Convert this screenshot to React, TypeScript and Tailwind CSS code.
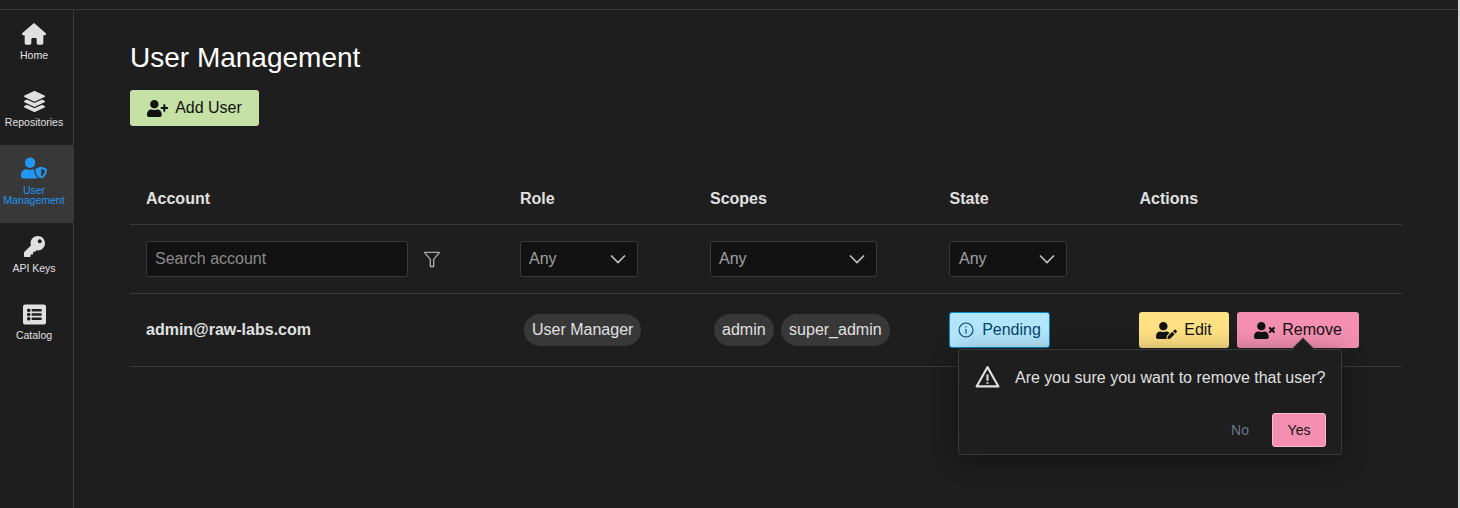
import React from "react";
import { FaLayerGroup, FaKey, FaUserPlus, FaUserEdit, FaUserTimes, FaUserShield, FaListAlt } from "react-icons/fa";
import { FaHouse } from "react-icons/fa6";

function Nav({ icon, label, active, h = 67, pt = 11, mb = 4 }: { icon: React.ReactNode; label: React.ReactNode; active?: boolean; h?: number; pt?: number; mb?: number }) {
  return (
    <div
      className={`flex flex-col items-center w-[73px] pr-[5px] text-[10.5px] leading-[10px] text-center ${active ? "bg-[#383838] text-[#2196f3]" : "text-[#e0e0e0]"}`}
      style={{ height: h, paddingTop: pt }}
    >
      <div className="h-[24px] flex items-center justify-center" style={{ marginBottom: mb }}>{icon}</div>
      <div>{label}</div>
    </div>
  );
}

function Any({ w, pl = "pl-[8px]" }: { w: string; pl?: string }) {
  return (
    <div className={`${w} ${pl} h-[36px] rounded-[3px] border border-[#3a3a3a] bg-[#121212] flex items-center justify-between pr-[11px] text-[#a0a0a0]`}>
      <span>Any</span>
      <svg viewBox="0 0 16 10" className="w-[16px] h-[10px] text-[#c4c4c4]" fill="none" stroke="currentColor" strokeWidth="1.6">
        <path d="M1 1.5 8 8.5 15 1.5" />
      </svg>
    </div>
  );
}

function Chip({ children }: { children: React.ReactNode }) {
  return <span className="h-[32px] px-[8px] rounded-[16px] bg-[#383838] flex items-center text-[#e0e0e0]">{children}</span>;
}

export default function App() {
  return (
    <div className="w-[1460px] h-[508px] overflow-hidden bg-[#1e1e1e] font-['Liberation_Sans',sans-serif] text-[16px] text-[#e0e0e0] flex">
      <div className="flex-1 min-w-0 flex flex-col">
        <div className="h-[10px] shrink-0 border-b border-[#3a3a3a]" />
        <div className="flex flex-1 min-h-0">
          <aside className="w-[74px] shrink-0 border-r border-[#3a3a3a] pt-[1px]">
            <Nav icon={<FaHouse className="w-[24px] h-[24px]" />} label="Home" />
            <Nav icon={<FaLayerGroup className="w-[21px] h-[21px]" />} label="Repositories" />
            <Nav active h={78} mb={5} icon={<FaUserShield className="w-[26px] h-[26px]" />} label={<>User<br />Management</>} />
            <Nav mb={5} icon={<FaKey className="w-[21px] h-[21px]" />} label="API Keys" />
            <Nav pt={12} mb={4} icon={<FaListAlt className="w-[23px] h-[23px]" />} label="Catalog" />
          </aside>
          <main className="flex-1 pl-[56px] pr-[56px] pt-[31px]">
            <h1 className="text-[28px] leading-[34px] text-white font-normal">User Management</h1>
            <button className="mt-[15px] h-[36px] w-[129px] rounded-[3px] bg-[#c5e1a5] text-[#121212] flex items-center justify-center gap-[7px]">
              <FaUserPlus className="w-[21px] h-[17px]" /> Add User
            </button>
            <div className="mt-[46px] w-[1272px]">
              <div className="h-[53px] pt-[1px] flex items-center font-bold border-b border-[#3a3a3a]">
                <div className="w-[390px] pl-[16px]">Account</div>
                <div className="w-[190px]">Role</div>
                <div className="w-[239.5px]">Scopes</div>
                <div className="w-[190px]">State</div>
                <div>Actions</div>
              </div>
              <div className="h-[69px] flex items-center border-b border-[#3a3a3a]">
                <div className="w-[390px] pl-[16px] flex items-center">
                  <div className="w-[262px] h-[36px] rounded-[3px] border border-[#3a3a3a] bg-[#121212] flex items-center pl-[8px] text-[#8a8a8a]">Search account</div>
                  <svg viewBox="0 0 24 24" className="w-[20px] h-[20px] ml-[14px] text-[#a8a8a8]" fill="none" stroke="currentColor" strokeWidth="1.6" strokeLinejoin="round">
                    <path d="M3 4h18l-7 8.5V21h-4v-8.5z" />
                  </svg>
                </div>
                <div className="w-[190px]"><Any w="w-[118px]" /></div>
                <div className="w-[239px]"><Any w="w-[167px]" /></div>
                <div className="w-[190px]"><Any w="w-[118px]" pl="pl-[9px]" /></div>
              </div>
              <div className="h-[73px] flex items-center border-b border-[#3a3a3a]">
                <div className="w-[390px] pl-[16px] font-bold">admin@raw-labs.com</div>
                <div className="w-[190px] pl-[4px] flex"><Chip>User Manager</Chip></div>
                <div className="w-[239px] pl-[4px] flex gap-[7.5px]"><Chip>admin</Chip><Chip>super_admin</Chip></div>
                <div className="w-[190px] flex">
                  <span className="h-[36px] w-[101px] rounded-[3px] border border-[#0288d1] bg-[#b3e5fc] text-[#044868] flex items-center justify-center gap-[8px]">
                    <svg viewBox="0 0 16 16" className="w-[16px] h-[16px]" fill="none" stroke="currentColor" strokeWidth="1.1"><circle cx="8" cy="8" r="7" /><path d="M8 7v4.5M8 4.2v1.2" /></svg>
                    Pending
                  </span>
                </div>
                <div className="flex gap-[8px] relative">
                  <button className="h-[36px] w-[90px] rounded-[3px] bg-[#ffe082] text-[#121212] flex items-center justify-center gap-[7px]">
                    <FaUserEdit className="w-[21px] h-[17px]" /> Edit
                  </button>
                  <button className="h-[36px] w-[122px] rounded-[3px] bg-[#f48fb1] text-[#121212] flex items-center justify-center gap-[7px]">
                    <FaUserTimes className="w-[21px] h-[17px]" /> Remove
                  </button>
                  <div className="absolute left-[-181px] top-[37px] w-[384px] h-[106px] rounded-[3px] border border-[#3a3a3a] bg-[#1e1e1e] shadow-[0_4px_24px_rgba(0,0,0,0.4)]">
                    <div className="absolute right-[30px] top-[-9px] w-[16px] h-[16px] rotate-45 bg-[#1e1e1e] border-l border-t border-[#3a3a3a]" />
                    <div className="relative flex items-center pl-[16px] pt-[14px] gap-[15px]">
                      <svg viewBox="0 0 24 24" className="w-[25px] h-[25px] text-[#e0e0e0]" fill="none" stroke="currentColor" strokeWidth="2" strokeLinejoin="round">
                        <path d="M12 3 1.5 21.5h21z" /><path d="M12 10v6M12 17.5v1.5" />
                      </svg>
                      <span className="relative top-[1px]">Are you sure you want to remove that user?</span>
                    </div>
                    <div className="absolute right-[15px] bottom-[7px] flex items-center gap-[4px] text-[14px]">
                      <span className="w-[56px] text-center text-[#6a7888]">No</span>
                      <button className="w-[54px] h-[34px] rounded-[3px] border border-[#f8bbd0] bg-[#f48fb1] text-[#121212]">Yes</button>
                    </div>
                  </div>
                </div>
              </div>
            </div>
          </main>
        </div>
      </div>
      <div className="w-[2px] shrink-0 bg-[#d8d8d8]" />
    </div>
  );
}
